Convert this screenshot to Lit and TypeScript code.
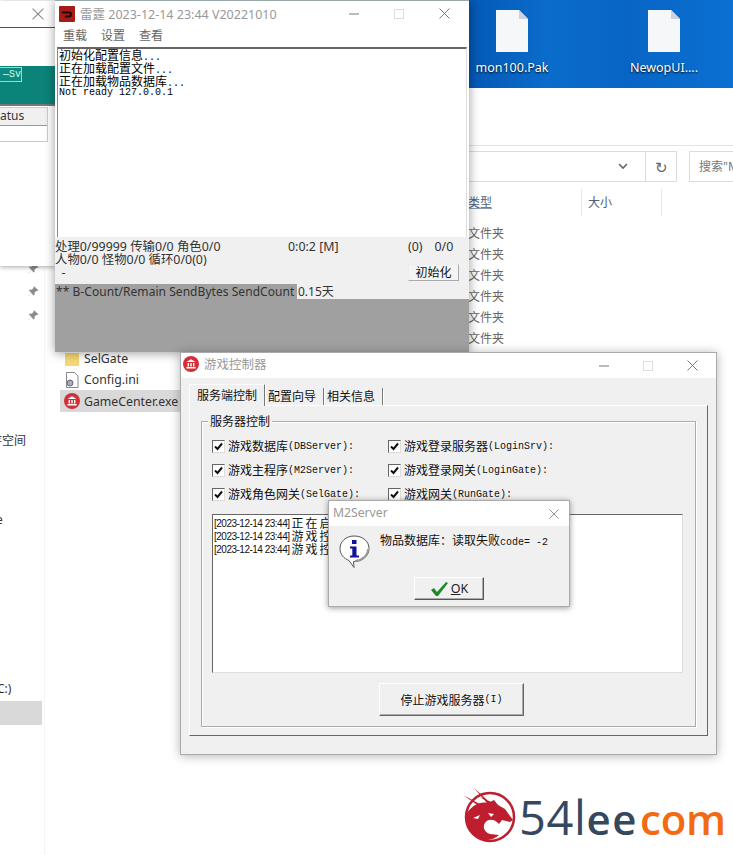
import { LitElement, html, css, svg } from "lit";
import { customElement } from "lit/decorators.js";

const CJK = `"Noto Sans","Noto Sans CJK SC",sans-serif`;

const closeX = (s = 11, c = "#777") => html`<svg width=${s} height=${s} viewBox="0 0 11 11"><path d="M.5.5l10 10M10.5.5l-10 10" stroke=${c} fill="none"/></svg>`;
const controls = (cls: string) => html`<div class="ctrls ${cls}">
  <svg width="10" height="10" viewBox="0 0 10 10"><path d="M0 5h10" stroke="#777"/></svg>
  <svg width="10" height="10" viewBox="0 0 10 10"><rect x=".5" y=".5" width="9" height="9" fill="none" stroke="#ddd"/></svg>
  ${closeX()}</div>`;
const bank = (s: number) => html`<svg width=${s} height=${s} viewBox="0 0 16 16"><circle cx="8" cy="8" r="8" fill="#d23038"/><path d="M3.5 6L8 3.2 12.5 6zM4.6 7h1.4v3.4H4.6zM7.3 7h1.4v3.4H7.3zM10 7h1.4v3.4H10zM3.4 11h9.2v1.4H3.4z" fill="#fff"/></svg>`;
const pin = () => html`<svg width="11" height="11" viewBox="0 0 11 11"><path d="M6.5.5l4 4-1 .6-1-.3-2 2 .1 2-.9.7-2.4-2.4L.8 10.2l-.3-.3 3-3L1 4.500l.7-.9 2 .1 2-2-.3-1z" fill="#8b8b8b"/></svg>`;
const fileIcon = () => html`<svg width="32" height="42" viewBox="0 0 32 42"><path d="M0 0h23l9 9v33H0z" fill="#f5f7f8"/><path d="M23 0l9 9h-9z" fill="#cdd3d8"/></svg>`;
const check = () => html`<span class="cb"><svg width="9" height="9" viewBox="0 0 9 9"><path d="M1 4.500l2.500 2.500L8 1.500" fill="none" stroke="#111" stroke-width="2"/></svg></span>`;
const lbl = (c: string, l: string) => html`<label class="chk">${check()}<span class="cn">${c}</span><span class="mono">${l}</span></label>`;

@customElement("app-root")
export class AppRoot extends LitElement {
  static styles = css`
    :host { display:block; width:733px; height:855px; position:relative; overflow:hidden; background:#fff;
      font-family:${css([CJK] as any as string)}; font-size:12px; color:#222; }
    .abs { position:absolute; }
    .desk { left:468px; top:0; width:265px; height:88px; background:linear-gradient(90deg,#0458b5,#0a6ccb 30%,#0865c6 60%,#0a70d2); }
    .dfile { position:absolute; top:10px; width:90px; display:flex; flex-direction:column; align-items:center; gap:7px; color:#fff; font-size:12.500px; text-shadow:0 1px 2px #000; }
    .f1 { left:-1px; } .f2 { left:151px; }
    .sep { left:468px; top:145px; width:265px; height:1px; background:#e3e3e3; }
    .addr { left:468px; top:151px; width:208px; height:29px; border:1px solid #dcdcdc; border-left:0; display:flex; justify-content:flex-end; }
    .addr .dd { width:44px; display:flex; align-items:center; justify-content:center; border-right:1px solid #dcdcdc; }
    .addr .rf { width:30px; display:flex; align-items:center; justify-content:center; color:#666; font-size:15px; }
    .search { left:689px; top:151px; width:44px; height:29px; border:1px solid #dcdcdc; border-right:0; box-sizing:content-box; padding-left:9px; line-height:29px; color:#777; overflow:hidden; white-space:nowrap; }
    .heads { left:468px; top:189px; height:27px; display:flex; color:#4c607a; line-height:27px; }
    .heads div { border-right:1px solid #e8e8e8; box-sizing:border-box; }
    .h1 { width:114px; text-decoration:underline; text-decoration-color:#8a9bb0; }
    .h2 { width:80px; padding-left:6px; }
    .types { left:468px; top:223px; display:flex; flex-direction:column; color:#666; line-height:21px; }
    .navline { left:44px; top:266px; width:1px; height:589px; background:#f5f5f5; }
    .navsel { left:0; top:701px; width:42px; height:24px; background:#d9d9d9; }
    .nav1 { left:0; top:431px; color:#333; } .nav1 span { margin-left:-10px; }
    .nav2 { left:-4px; top:511px; color:#333; }
    .nav3 { left:-3px; top:680px; color:#333; }
    .p1 { left:28px; top:261px; } .p2 { left:28px; top:284px; } .p3 { left:28px; top:308px; }
    .files { left:60px; top:348px; width:120px; display:flex; flex-direction:column; font-size:12.300px; color:#333; }
    .file { height:21px; display:flex; align-items:center; gap:4px; padding-left:4px; white-space:nowrap; }
    .file.sel { background:#d9d9d9; height:22px; }
    .fico { width:16px; height:16px; display:flex; justify-content:center; }

    .win { position:absolute; box-sizing:border-box; display:flex; flex-direction:column; background:#f0f0f0; }
    .left { left:0; top:1px; width:56px; height:265px; background:#fff; box-shadow:0 1px 5px rgba(0,0,0,.35); overflow:hidden; }
    .ltitle { height:26px; display:flex; align-items:center; padding-left:32px; border-bottom:1px solid #555; }
    .lgap { height:38px; }
    .teal { height:38px; background:#0b8378; padding-top:1px; box-sizing:border-box; }
    .tbtn { width:22px; height:15px; box-sizing:border-box; border:1px solid #9bd6d0; border-left:0; font:10px "Liberation Mono",monospace; color:#cfe; text-align:right; line-height:13px; background:#0d8a80; }
    .lh { height:2px; background:#777; }
    .lgrid { margin-top:1px; width:48px; border:1px solid #ccc; border-left:0; box-sizing:border-box; height:35px; }
    .lgrid div { height:17px; background:#f0f0f0; border-bottom:1px solid #999; font-size:12px; line-height:16px; padding-right:25px; text-align:right; color:#333; }

    .main { left:55px; top:0; width:414px; height:352px; background:#fff; box-shadow:0 1px 10px rgba(0,0,0,.4); border-top:1px solid #9aa; }
    .tbar { height:25px; flex:none; display:flex; align-items:center; background:#fff; position:relative; }
    .ctrls { margin-left:auto; display:flex; align-items:center; }
    .main .ctrls { gap:35px; padding-right:19px; }
    .gc .ctrls { gap:34px; padding-right:18px; }
    .logo16 { margin:0 5px 0 4px; }
    .ttl { color:#999; font-size:12.500px; white-space:nowrap; padding-bottom:1px; }
    .menu { height:21px; flex:none; display:flex; gap:14px; padding:0 0 4px 8px; color:#666; font-size:12px; align-items:center; box-sizing:border-box; }
    .log { height:190px; flex:none; margin:0 2px; box-sizing:border-box; border:1px solid #888; border-top:2px solid #666; border-bottom:0; border-right-color:#ddd; padding:0 1px; background:#fff; color:#000; font-size:12px; line-height:13px; }
    .log div { height:13px; white-space:nowrap; }
    .log div.lm { margin-top:-2px; }
    .mono { font:10px/13px "Liberation Mono",monospace; }
    .stat { height:47px; flex:none; background:#f0f0f0; display:grid; grid-template-columns:233px 120px 1fr; font-size:12.400px; line-height:13px; color:#333; padding-top:3px; box-sizing:border-box; white-space:nowrap; }
    .stat .r { display:flex; flex-direction:column; align-items:flex-start; gap:11px; padding-left:0; }
    .sr { display:flex; gap:12px; }
    .init { width:51px; height:17px; background:#f4f4f4; border:1px solid #aaa; border-top-color:#eee; border-left-color:#eee; box-sizing:border-box; font-size:12px; line-height:15px; text-align:center; color:#111; }
    .cnt { height:15px; flex:none; display:flex; background:#f0f0f0; line-height:15px; color:#333; white-space:nowrap; font-size:12px; }
    .cnt b { font-weight:400; width:242px; background:#a0a0a0; padding-left:1px; box-sizing:border-box; overflow:hidden; letter-spacing:.05px; }
    .cnt span { padding-left:1px; }
    .dark { flex:1; background:#a0a0a0; }

    .gc { left:180px; top:352px; width:537px; height:403px; border:1px solid #aaa; box-shadow:0 1px 10px rgba(0,0,0,.3); }
    .gc .tbar { height:25px; }
    .gc .ttl { font-size:12.500px; padding-bottom:4px; }
    .gc .logo16 { margin:0 5px 0 2px; }
    .tabs { display:flex; height:27px; flex:none; padding:9px 0 0 8px; box-sizing:border-box; align-items:flex-end; font-size:12px; color:#111; position:relative; z-index:1; }
    .tab { height:17px; line-height:18px; border-right:1px solid #777; box-shadow:1px 0 0 #fff; }
    .tab.a { padding:0 7px 0 7px; height:21px; line-height:22px; background:#f0f0f0; margin-bottom:-1px; border-left:1px solid #fff; border-top:1px solid #fff; }
    .tab.n { padding:0 5px 0 2px; margin-left:1px; width:50px; }
    .panel { margin:0 8px 0 8px; height:331px; flex:none; box-sizing:border-box; border:1px solid; border-color:#fff #666 #666 #fff; padding:15px 11px 8px; }
    .group { position:relative; height:100%; box-sizing:border-box; border:1px solid #aaa; box-shadow:inset 1px 1px 0 #fff, 1px 1px 0 #fff; padding:16px 10px 0; }
    .leg { position:absolute; left:6px; top:-8px; background:#f0f0f0; padding:0 2px; font-size:12px; line-height:16px; color:#111; }
    .chks { display:grid; grid-template-columns:176px 1fr; row-gap:8px; }
    .chk { display:flex; align-items:center; height:16px; white-space:nowrap; color:#111; }
    .cb { width:11px; height:11px; border:1px solid; border-color:#666 #ddd #ddd #666; background:#fff; display:flex; align-items:center; justify-content:center; margin-right:3px; flex:none; }
    .cn { font-size:12px; }
    .memo { margin-top:12px; height:159px; box-sizing:border-box; background:#fff; border:1px solid; border-color:#666 #ddd #ddd #666; margin-right:2px; padding:2px 1px; font-size:10px; line-height:13px; color:#111; white-space:nowrap; overflow:hidden; }
    .memo div { height:13px; display:flex; align-items:center; }
    .stamp { font-family:"Liberation Sans",sans-serif; letter-spacing:-.5px; margin-right:2px; }
    .memo .z { font-size:12px; letter-spacing:2px; }
    .stop { margin:10px auto 0; width:145px; height:33px; position:relative; left:3px; background:#f0f0f0; border:1px solid; border-color:#fff #666 #666 #fff; box-shadow:inset -1px -1px 0 #aaa; box-sizing:border-box; display:flex; align-items:center; justify-content:center; font-size:12px; color:#111; }

    .dlg { left:328px; top:500px; width:242px; height:107px; border:1px solid #aaa; box-shadow:0 1px 6px rgba(0,0,0,.4); }
    .dt { height:25px; flex:none; background:#fff; display:flex; align-items:center; justify-content:space-between; padding:0 10px 0 4px; color:#999; font-size:12.200px; }
    .dt span { padding-bottom:3px; }
    .dbody { display:flex; padding:9px 0 0 10px; height:43px; gap:9px; flex:none; box-sizing:border-box; }
    .dmsg { font-size:12px; line-height:14px; margin-top:-1px; color:#111; white-space:nowrap; }
    .ok { margin:8px 0 0 85px; width:70px; height:23px; box-sizing:border-box; border:1px solid; border-color:#fff #555 #555 #fff; box-shadow:inset -1px -1px 0 #aaa; display:flex; align-items:center; justify-content:center; gap:2px; font-size:12.500px; color:#222; }
    .ok u { text-underline-offset:1px; }

    .brand { left:461px; top:785px; display:flex; align-items:center; height:62px; }
    .bt { margin-left:-4px; white-space:nowrap; font-family:"Open Sans",sans-serif; line-height:50px; display:flex; align-items:baseline; height:50px; padding-top:1px; }
    .b1 { color:#34495e; font-size:47px; letter-spacing:.6px; }
    .b2 { color:#34495e; font-size:42px; letter-spacing:1.6px; font-weight:600; }
    .b3 { color:#f26a12; font-size:42px; font-weight:600; margin-left:2px; letter-spacing:-.2px; }
  `;

  render() {
    return html`
      <div class="abs desk">
        <div class="dfile f1">${fileIcon()}<span>mon100.Pak</span></div>
        <div class="dfile f2">${fileIcon()}<span>NewopUI....</span></div>
      </div>
      <div class="abs sep"></div>
      <div class="abs addr">
        <div class="dd"><svg width="10" height="7" viewBox="0 0 10 7"><path d="M1 1l4 4 4-4" fill="none" stroke="#666" stroke-width="1.600"/></svg></div>
        <div class="rf">↻</div>
      </div>
      <div class="abs search">搜索"M</div>
      <div class="abs heads"><div class="h1">类型</div><div class="h2">大小</div></div>
      <div class="abs types">${[1,2,3,4,5,6].map(() => html`<div>文件夹</div>`)}</div>
      <div class="abs navline"></div>
      <div class="abs navsel"></div>
      <div class="abs nav1"><span>存空间</span></div>
      <div class="abs nav2">e</div>
      <div class="abs nav3">C:)</div>
      <div class="abs p1">${pin()}</div><div class="abs p2">${pin()}</div><div class="abs p3">${pin()}</div>
      <div class="abs files">
        <div class="file"><span class="fico"><svg width="14" height="15" viewBox="0 0 14 15"><path d="M0 0h14v15H0z" fill="#f7d774"/><path d="M0 0h14v2H0z" fill="#fff"/></svg></span>SelGate</div>
        <div class="file"><span class="fico"><svg width="14" height="16" viewBox="0 0 14 16"><path d="M1.500.5h8l3.500 3.500v11.500h-11.500z" fill="#fff" stroke="#888"/><circle cx="5" cy="11" r="3" fill="#aab" stroke="#667"/></svg></span>Config.ini</div>
        <div class="file sel"><span class="fico">${bank(16)}</span>GameCenter.exe</div>
      </div>

      <div class="win left">
        <div class="ltitle">${closeX(12, "#888")}</div>
        <div class="lgap"></div>
        <div class="teal"><div class="tbtn">—Sv</div></div>
        <div class="lh"></div>
        <div class="lgrid"><div>atus</div></div>
      </div>

      <div class="win main">
        <div class="tbar">
          <svg class="logo16" width="16" height="16" viewBox="0 0 16 16"><rect width="16" height="16" rx="1" fill="#a81c18"/><path d="M3 5.500h7a3 3 0 0 1 0 6H5.500l1-2H10a1 1 0 0 0 0-2H3z" fill="#1c0a08"/></svg>
          <span class="ttl">雷霆 2023-12-14 23:44 V20221010</span>
          ${controls("")}
        </div>
        <div class="menu"><span>重载</span><span>设置</span><span>查看</span></div>
        <div class="log">
          <div>初始化配置信息<span class="mono">...</span></div>
          <div>正在加载配置文件<span class="mono">...</span></div>
          <div>正在加载物品数据库<span class="mono">...</span></div>
          <div class="mono lm">Not ready 127.0.0.1</div>
        </div>
        <div class="stat">
          <div>处理0/99999 传输0/0 角色0/0<br>人物0/0 怪物0/0 循环0/0(0)<br>&nbsp;&nbsp;-</div>
          <div>0:0:2 [M]</div>
          <div class="r"><div class="sr"><span>(0)</span><span>0/0</span></div><div class="init">初始化</div></div>
        </div>
        <div class="cnt"><b>** B-Count/Remain SendBytes SendCount</b><span>0.15天</span></div>
        <div class="dark"></div>
      </div>

      <div class="win gc">
        <div class="tbar"><span class="logo16">${bank(16)}</span><span class="ttl">游戏控制器</span>${controls("")}</div>
        <div class="tabs">
          <div class="tab a">服务端控制</div><div class="tab n">配置向导</div><div class="tab n">相关信息</div>
        </div>
        <div class="panel">
          <div class="group">
            <div class="leg">服务器控制</div>
            <div class="chks">
              ${lbl("游戏数据库", "(DBServer):")}${lbl("游戏登录服务器", "(LoginSrv):")}
              ${lbl("游戏主程序", "(M2Server):")}${lbl("游戏登录网关", "(LoginGate):")}
              ${lbl("游戏角色网关", "(SelGate):")}${lbl("游戏网关", "(RunGate):")}
            </div>
            <div class="memo">
              <div><span class="stamp">[2023-12-14 23:44]</span><span class="z">正在启动</span></div>
              <div><span class="stamp">[2023-12-14 23:44]</span><span class="z">游戏控制</span></div>
              <div><span class="stamp">[2023-12-14 23:44]</span><span class="z">游戏控制</span></div>
            </div>
            <div class="stop"><span>停止游戏服务器</span><span class="mono">(I)</span></div>
          </div>
        </div>
      </div>

      <div class="win dlg">
        <div class="dt"><span>M2Server</span>${closeX(10, "#888")}</div>
        <div class="dbody">
          <svg width="32" height="34" viewBox="0 0 32 34"><path d="M15 1C7 1 1 6.500 1 13.500c0 6 4 10 9 12l5 7-.5-6C23 27 30 21 30 13.500 30 6.500 24 1 15 1z" fill="#fff" stroke="#555"/><path d="M29 14c0 6-5 11-13 12" fill="none" stroke="#999" stroke-width="2"/><rect x="13" y="5" width="4.500" height="4" fill="#12129a"/><path d="M11 11.500h6.500v9H20v2h-9v-2h2.300v-7H11z" fill="#12129a"/></svg>
          <div class="dmsg">物品数据库：读取失败<span class="mono">code= -2</span></div>
        </div>
        <div class="ok"><svg width="19" height="16" viewBox="0 0 19 16"><path d="M1 9l3-2 3 4L16 1l2 1L8 15H6z" fill="#1f8a2a"/></svg><span><u>O</u>K</span></div>
      </div>

      <div class="abs brand">
        <svg width="62" height="62" viewBox="0 0 62 62">
          ${svg`<circle cx="29" cy="32" r="24" fill="none" stroke="#be1e2d" stroke-width="2.500"/>
          <path d="M5 30c4-8 13-14 22-12l6-3 4 5 7 4 8 11-3 2-8-2-3 4c-4-5-11-6-14-1-3 4 0 10 5 11l9 1c-3 3-8 5-13 5C13 55 4 44 5 30z" fill="#be1e2d"/>
          <path d="M2 10l26 14-3 2zM13 3l22 20-3 2zM19 12l18 8-3 2z" fill="#be1e2d"/>
          <path d="M12 33l7-3-2 4zM27 28l6 1-3 3z" fill="#fff"/>`}
        </svg>
        <div class="bt"><span class="b1">54l</span><span class="b2">ee</span><span class="b3">com</span></div>
      </div>
    `;
  }
}
